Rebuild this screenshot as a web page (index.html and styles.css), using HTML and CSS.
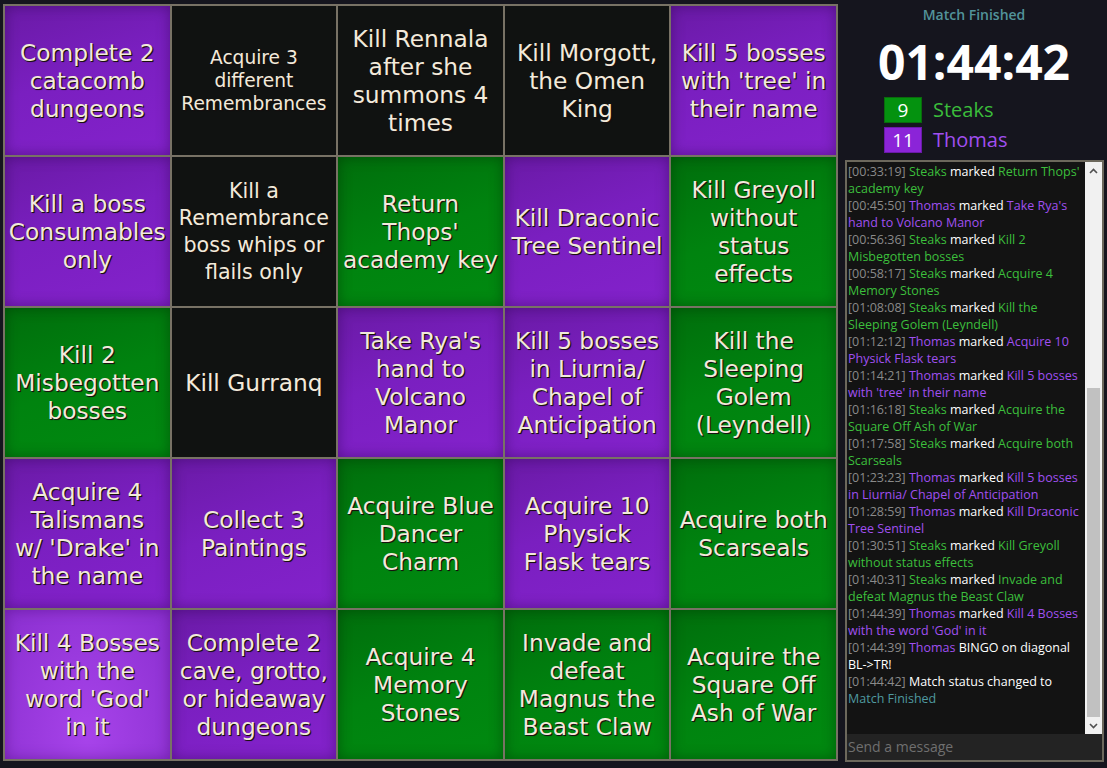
FILE: index.html
```html
<!DOCTYPE html>
<html>
<head>
<meta charset="utf-8">
<link rel="stylesheet" href="styles.css">
</head>
<body>
<div class="page">
  <div class="board">
    <div class="cell purple"><span>Complete 2<br>catacomb<br>dungeons</span></div>
    <div class="cell black small"><span>Acquire 3<br>different<br>Remembrances</span></div>
    <div class="cell black"><span>Kill Rennala<br>after she<br>summons 4<br>times</span></div>
    <div class="cell black"><span>Kill Morgott,<br>the Omen<br>King</span></div>
    <div class="cell purple"><span>Kill 5 bosses<br>with 'tree' in<br>their name</span></div>

    <div class="cell purple"><span>Kill a boss<br>Consumables<br>only</span></div>
    <div class="cell black medium"><span>Kill a<br>Remembrance<br>boss whips or<br>flails only</span></div>
    <div class="cell green"><span>Return<br>Thops'<br>academy key</span></div>
    <div class="cell purple"><span>Kill Draconic<br>Tree Sentinel</span></div>
    <div class="cell green"><span>Kill Greyoll<br>without<br>status<br>effects</span></div>

    <div class="cell green"><span>Kill 2<br>Misbegotten<br>bosses</span></div>
    <div class="cell black"><span>Kill Gurranq</span></div>
    <div class="cell purple"><span>Take Rya's<br>hand to<br>Volcano<br>Manor</span></div>
    <div class="cell purple"><span>Kill 5 bosses<br>in Liurnia/<br>Chapel of<br>Anticipation</span></div>
    <div class="cell green"><span>Kill the<br>Sleeping<br>Golem<br>(Leyndell)</span></div>

    <div class="cell purple"><span>Acquire 4<br>Talismans<br>w/ 'Drake' in<br>the name</span></div>
    <div class="cell purple"><span>Collect 3<br>Paintings</span></div>
    <div class="cell green"><span>Acquire Blue<br>Dancer<br>Charm</span></div>
    <div class="cell purple"><span>Acquire 10<br>Physick<br>Flask tears</span></div>
    <div class="cell green"><span>Acquire both<br>Scarseals</span></div>

    <div class="cell purple lit"><span>Kill 4 Bosses<br>with the<br>word 'God'<br>in it</span></div>
    <div class="cell purple"><span>Complete 2<br>cave, grotto,<br>or hideaway<br>dungeons</span></div>
    <div class="cell green"><span>Acquire 4<br>Memory<br>Stones</span></div>
    <div class="cell green"><span>Invade and<br>defeat<br>Magnus the<br>Beast Claw</span></div>
    <div class="cell green"><span>Acquire the<br>Square Off<br>Ash of War</span></div>
  </div>

  <div class="side">
    <div class="status">Match Finished</div>
    <div class="timer">01:44:42</div>
    <div class="scores">
      <div class="score-row">
        <div class="score-box box-green">9</div>
        <div class="score-name name-green">Steaks</div>
      </div>
      <div class="score-row">
        <div class="score-box box-purple">11</div>
        <div class="score-name name-purple">Thomas</div>
      </div>
    </div>
    <div class="chat">
      <div class="chat-body">
        <div class="messages">
          <p class="msg"><span class="ts">[00:33:19]</span> <span class="g">Steaks</span> <span class="w">marked</span> <span class="g">Return Thops' academy key</span></p>
          <p class="msg"><span class="ts">[00:45:50]</span> <span class="p">Thomas</span> <span class="w">marked</span> <span class="p">Take Rya's hand to Volcano Manor</span></p>
          <p class="msg"><span class="ts">[00:56:36]</span> <span class="g">Steaks</span> <span class="w">marked</span> <span class="g">Kill 2 Misbegotten bosses</span></p>
          <p class="msg"><span class="ts">[00:58:17]</span> <span class="g">Steaks</span> <span class="w">marked</span> <span class="g">Acquire 4 Memory Stones</span></p>
          <p class="msg"><span class="ts">[01:08:08]</span> <span class="g">Steaks</span> <span class="w">marked</span> <span class="g">Kill the Sleeping Golem (Leyndell)</span></p>
          <p class="msg"><span class="ts">[01:12:12]</span> <span class="p">Thomas</span> <span class="w">marked</span> <span class="p">Acquire 10 Physick Flask tears</span></p>
          <p class="msg"><span class="ts">[01:14:21]</span> <span class="p">Thomas</span> <span class="w">marked</span> <span class="p">Kill 5 bosses with 'tree' in their name</span></p>
          <p class="msg"><span class="ts">[01:16:18]</span> <span class="g">Steaks</span> <span class="w">marked</span> <span class="g">Acquire the Square Off Ash of War</span></p>
          <p class="msg"><span class="ts">[01:17:58]</span> <span class="g">Steaks</span> <span class="w">marked</span> <span class="g">Acquire both Scarseals</span></p>
          <p class="msg"><span class="ts">[01:23:23]</span> <span class="p">Thomas</span> <span class="w">marked</span> <span class="p">Kill 5 bosses in Liurnia/ Chapel of Anticipation</span></p>
          <p class="msg"><span class="ts">[01:28:59]</span> <span class="p">Thomas</span> <span class="w">marked</span> <span class="p">Kill Draconic Tree Sentinel</span></p>
          <p class="msg"><span class="ts">[01:30:51]</span> <span class="g">Steaks</span> <span class="w">marked</span> <span class="g">Kill Greyoll without status effects</span></p>
          <p class="msg"><span class="ts">[01:40:31]</span> <span class="g">Steaks</span> <span class="w">marked</span> <span class="g">Invade and defeat Magnus the Beast Claw</span></p>
          <p class="msg"><span class="ts">[01:44:39]</span> <span class="p">Thomas</span> <span class="w">marked</span> <span class="p">Kill 4 Bosses with the word 'God' in it</span></p>
          <p class="msg"><span class="ts">[01:44:39]</span> <span class="p">Thomas</span> <span class="w">BINGO on diagonal BL-&gt;TR!</span></p>
          <p class="msg"><span class="ts">[01:44:42]</span> <span class="w">Match status changed to</span> <span class="t">Match Finished</span></p>
        </div>
        <div class="scrollbar">
          <div class="sb-btn">
            <svg width="9" height="6" viewBox="0 0 9 6"><path d="M1 5 L4.5 1.5 L8 5" fill="none" stroke="#505050" stroke-width="1.6"/></svg>
          </div>
          <div class="sb-track"><div class="sb-thumb"></div></div>
          <div class="sb-btn">
            <svg width="9" height="6" viewBox="0 0 9 6"><path d="M1 1 L4.5 4.5 L8 1" fill="none" stroke="#505050" stroke-width="1.6"/></svg>
          </div>
        </div>
      </div>
      <div class="input">Send a message</div>
    </div>
  </div>
</div>
</body>
</html>
```

FILE: styles.css
```css
html, body {
  margin: 0;
  padding: 0;
  background: #15151e;
}
.page {
  display: flex;
  width: 1107px;
  height: 768px;
  overflow: hidden;
}
.board {
  margin: 4px 0 0 3px;
  width: 835px;
  height: 757px;
  box-sizing: border-box;
  padding: 2px;
  gap: 2px;
  background: #787265;
  display: grid;
  grid-template-columns: repeat(5, 1fr);
  grid-template-rows: repeat(5, 1fr);
}
.cell {
  display: flex;
  align-items: center;
  justify-content: center;
  text-align: center;
  white-space: nowrap;
  font-family: "DejaVu Sans", Verdana, sans-serif;
  font-size: 23.3px;
  line-height: 28px;
  color: #f2eadb;
  text-shadow: 1px 1px 0 #1a1010, 1px 1px 1px rgba(0,0,0,0.6);
  overflow: hidden;
}
.cell.small {
  font-size: 18.6px;
  line-height: 23px;
}
.cell.medium {
  font-size: 20.6px;
  line-height: 27px;
}
.purple {
  background: linear-gradient(160deg, #6a1aa6 0%, #7a1fc0 45%, #8422cc 100%);
  box-shadow: inset 0 0 14px rgba(40, 0, 70, 0.45);
}
.purple.lit {
  background: radial-gradient(ellipse at 50% 85%, #a743ea 0%, #9a3ade 45%, #8a2fcf 100%);
  box-shadow: inset 0 0 14px rgba(60, 0, 100, 0.4);
}
.green {
  background: linear-gradient(160deg, #006e0c 0%, #00830f 50%, #008a10 100%);
  box-shadow: inset 0 0 14px rgba(0, 40, 0, 0.45);
}
.black {
  background: #101211;
}

.side {
  width: 269px;
  display: flex;
  flex-direction: column;
  font-family: "Open Sans", "Noto Sans", sans-serif;
}
.status {
  margin-top: 5px;
  height: 20px;
  line-height: 20px;
  text-align: center;
  font-size: 14px;
  font-weight: 600;
  color: #52939a;
  padding-left: 3px;
}
.timer {
  margin-top: 9px;
  height: 56px;
  line-height: 56px;
  text-align: center;
  font-size: 48px;
  font-weight: 700;
  color: #ffffff;
  padding-left: 3px;
}
.scores {
  margin-top: 7px;
  padding-left: 46px;
  display: flex;
  flex-direction: column;
  gap: 4px;
}
.score-row {
  display: flex;
  align-items: center;
  height: 26px;
}
.score-box {
  width: 38px;
  height: 26px;
  box-sizing: border-box;
  text-align: center;
  font-size: 19px;
  line-height: 24px;
  color: #ffffff;
}
.box-green {
  background: #04920f;
  border: 1px solid #0a6b0c;
}
.box-purple {
  background: #8b24d8;
  border: 1px solid #6a1aa8;
}
.score-name {
  margin-left: 11px;
  font-size: 20px;
  line-height: 26px;
}
.name-green { color: #3bbd3b; }
.name-purple { color: #a04ff0; }

.chat {
  margin: 7px 0 0 7px;
  width: 259px;
  height: 602px;
  box-sizing: border-box;
  border: 2px solid #6c685c;
  display: flex;
  flex-direction: column;
  background: #131313;
}
.chat-body {
  flex: 1;
  display: flex;
  min-height: 0;
}
.messages {
  flex: 1;
  padding: 1px 0 0 1px;
  font-size: 12.5px;
  line-height: 17px;
  color: #ffffff;
  overflow: hidden;
}
.msg {
  margin: 0;
}
.ts { color: #8a8a8a; }
.g { color: #3cbf3c; }
.p { color: #a050f0; }
.w { color: #ffffff; }
.t { color: #4f9aa0; }
.scrollbar {
  width: 17px;
  background: #f1f1f1;
  display: flex;
  flex-direction: column;
}
.sb-btn {
  height: 17px;
  display: flex;
  align-items: center;
  justify-content: center;
}
.sb-track {
  flex: 1;
  display: flex;
  flex-direction: column;
  justify-content: flex-end;
}
.sb-thumb {
  height: 329px;
  margin: 0 2px;
  background: #c1c1c1;
}
.input {
  height: 26px;
  background: #232323;
  color: #6f6f6f;
  font-size: 14px;
  line-height: 25px;
  padding-left: 1px;
}
```
